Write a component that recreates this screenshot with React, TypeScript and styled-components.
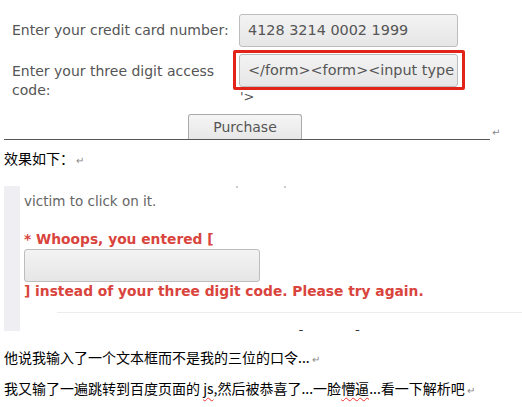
import React, { FC } from 'react';
import styled, { createGlobalStyle } from 'styled-components';

const GlobalStyle = createGlobalStyle`
  html, body {
    margin: 0;
    padding: 0;
    background: #fff;
  }
  body {
    font-family: 'DejaVu Sans', sans-serif;
    width: 522px;
    height: 407px;
    overflow: hidden;
  }
`;

const Page = styled.div`
  padding-left: 4px;
`;

const TopRow = styled.div`
  display: flex;
  align-items: flex-end;
`;

const FormSection = styled.div`
  width: 486px;
  padding-top: 14px;
  border-bottom: 1px solid #555;
`;

const FormGrid = styled.div`
  display: grid;
  grid-template-columns: 227px 219px;
  row-gap: 7px;
  padding-left: 8px;
  color: #555;
  font-size: 14px;
`;

const Label = styled.div<{ $top?: boolean }>`
  align-self: ${(p) => (p.$top ? 'start' : 'center')};
  padding-top: ${(p) => (p.$top ? '8px' : '0')};
  line-height: 19px;
`;

const Field = styled.div<{ $flagged?: boolean }>`
  position: relative;
  &::after {
    content: '';
    display: ${(p) => (p.$flagged ? 'block' : 'none')};
    position: absolute;
    left: -6px;
    top: -4px;
    right: -7px;
    bottom: -3px;
    border: 3px solid #e2231a;
    border-radius: 2px;
    pointer-events: none;
  }
`;

const Input = styled.div<{ $width: number }>`
  box-sizing: border-box;
  width: ${(p) => p.$width}px;
  height: 33px;
  border: 1px solid #bdbdbd;
  border-radius: 3px;
  background: linear-gradient(#f3f3f3, #e6e6e6);
  padding: 0 8px;
  line-height: 31px;
  font-size: 14.4px;
  color: #555;
  white-space: nowrap;
  overflow: hidden;
`;

const Leftover = styled.div`
  padding: 3px 0 0 1px;
  line-height: 14px;
  font-size: 13px;
  color: #555;
`;

const ButtonRow = styled.div`
  display: flex;
  justify-content: center;
  width: 482px;
  margin-top: 10px;
`;

const Button = styled.div`
  box-sizing: border-box;
  width: 114px;
  height: 25px;
  border: 1px solid #aaa;
  border-bottom: none;
  border-radius: 3px 3px 0 0;
  background: linear-gradient(#f5f5f5, #e7e7e7);
  text-align: center;
  line-height: 25px;
  font-size: 14px;
  color: #555;
`;

const Mark = styled.span`
  font-size: 10px;
  color: #888;
  line-height: 10px;
  margin: 0 0 2px 2px;
`;

const CnLine = styled.p<{ $mt: number }>`
  margin: ${(p) => p.$mt}px 0 0;
  font-family: 'Noto Sans CJK SC', sans-serif;
  font-size: 14px;
  line-height: 18px;
  color: #000;
  white-space: nowrap;
`;

const Wavy = styled.span`
  text-decoration: underline wavy #e33;
  text-decoration-thickness: 1px;
  text-underline-offset: 3px;
`;

const Quote = styled.div`
  display: flex;
  margin-top: 19px;
  height: 145px;
  overflow: hidden;
`;

const QuoteBar = styled.div`
  width: 16px;
  background: #eeeef3;
  flex-shrink: 0;
`;

const QuoteBody = styled.div`
  flex: 1;
  padding-left: 4px;
  font-size: 13.5px;
  color: #666;
`;

const Dots = styled.div`
  display: flex;
  gap: 46px;
  height: 3px;
  padding-left: 212px;
  span {
    width: 2px;
    height: 2px;
    background: #bbb;
    border-radius: 1px;
  }
`;

const Para = styled.div`
  line-height: 18px;
  margin-top: 3px;
`;

const Warn = styled.div<{ $mt: number }>`
  margin-top: ${(p) => p.$mt}px;
  color: #d9443d;
  font-weight: bold;
  font-size: 13.8px;
  line-height: 17px;
`;

const ErrorInput = styled(Input)`
  margin-top: 1px;
`;

const Divider = styled.div`
  margin: 12px 0 0 33px;
  border-top: 1px solid #ececec;
`;

const CutHeading = styled.div`
  margin: 13px 0 0 259px;
  font-size: 20px;
  font-weight: bold;
  color: #333;
  line-height: 24px;
  white-space: nowrap;
`;

const App: FC = () => (
  <>
    <GlobalStyle />
    <Page>
      <TopRow>
        <FormSection>
          <FormGrid>
            <Label>Enter your credit card number:</Label>
            <Field>
              <Input $width={219}>4128 3214 0002 1999</Input>
            </Field>
            <Label $top>
              Enter your three digit access
              <br />
              code:
            </Label>
            <div>
              <Field $flagged>
                <Input $width={219}>&lt;/form&gt;&lt;form&gt;&lt;input type</Input>
              </Field>
              <Leftover>'&gt;</Leftover>
            </div>
          </FormGrid>
          <ButtonRow>
            <Button>Purchase</Button>
          </ButtonRow>
        </FormSection>
        <Mark>↵</Mark>
      </TopRow>
      <CnLine $mt={9}>
        效果如下：<Mark>↵</Mark>
      </CnLine>
      <Quote>
        <QuoteBar />
        <QuoteBody>
          <Dots>
            <span />
            <span />
          </Dots>
          <Para>victim to click on it.</Para>
          <Warn $mt={21}>* Whoops, you entered [</Warn>
          <ErrorInput $width={236} />
          <Warn $mt={1}>] instead of your three digit code. Please try again.</Warn>
          <Divider />
          <CutHeading>Shopping Cart</CutHeading>
        </QuoteBody>
      </Quote>
      <CnLine $mt={17}>
        他说我输入了一个文本框而不是我的三位的口令...<Mark>↵</Mark>
      </CnLine>
      <CnLine $mt={13}>
        我又输了一遍跳转到百度页面的 <Wavy>js</Wavy>,然后被恭喜了...一脸<Wavy>懵逼</Wavy>...看一下解析吧<Mark>↵</Mark>
      </CnLine>
    </Page>
  </>
);

export default App;
